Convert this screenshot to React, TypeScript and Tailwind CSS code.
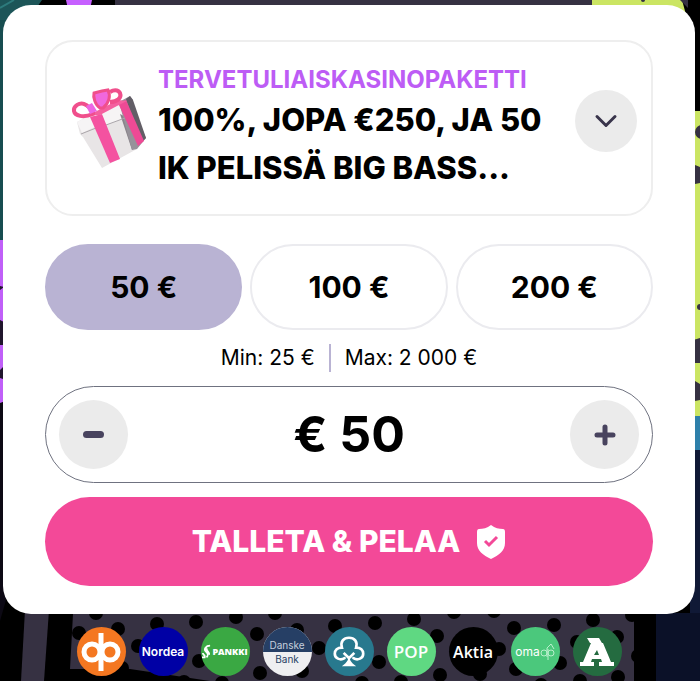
import React, { useState } from "react";
import { ChevronDown } from "lucide-react";

const presets = [50, 100, 200];

// dots visible under the bank row
const dots = [
  [79, 633], [96, 613], [118, 629], [138, 646], [157, 624], [122, 668], [196, 622], [199, 661], [236, 617],
  [257, 634], [260, 673], [275, 613], [297, 630], [319, 648], [335, 626], [302, 671], [375, 623], [379, 662],
  [414, 619], [437, 636], [440, 675], [401, 682], [454, 612], [494, 611], [514, 628], [499, 649], [480, 674],
  [554, 625], [560, 663], [516, 669], [593, 620], [617, 637], [577, 642], [618, 677], [632, 615], [638, 656],
  [184, 682], [222, 683], [362, 683], [541, 685], [580, 681],
];

function Backdrop() {
  return (
    <svg
      className="absolute inset-0 h-full w-full"
      viewBox="0 0 700 681"
      preserveAspectRatio="none"
      aria-hidden="true"
    >
      <rect width="700" height="681" fill="#000" />
      {/* top edge */}
      <path d="M0 0h42L28 20H0z" fill="#1c5558" />
      <path d="M0 8 14 0M0 34 24 6" stroke="#2d7b7c" strokeWidth="2" />
      <path d="M66 0h26l-3 14H69z" fill="#c660ff" />
      <rect x="115" width="480" height="20" fill="#363142" />
      <path d="M592 0h90l6 22-96-8z" fill="#cbe563" />
      <circle cx="643" cy="0" r="2" fill="#363142" />
      <path d="m680 0 8 8V0z" fill="#363142" />
      {/* left edge */}
      <path d="M0 20h6v220H0z" fill="#174d50" />
      <path d="M0 240h6v161l-6 2z" fill="#c05ff8" />
      <path d="M0 286l4 1-4 3zM0 320l6 3v22H0zM0 370l6-6v16l-6-2z" fill="#20152c" />
      <path d="M0 403h6v278H0z" fill="#0c0914" />
      <path d="M6 600v81H0v-60z" fill="#000" />
      {/* right edge */}
      <path d="M690 111h10v305h-10z" fill="#cbe563" />
      <ellipse cx="702" cy="132" rx="7" ry="7" fill="#363142" />
      <path d="M690 163l10 4v16l-10 2zM690 341l10-3v25h-10zM690 378l10 6v16l-10 2z" fill="#363142" />
      <circle cx="700" cy="307" r="3" fill="#363142" />
      <path d="M690 416h10v65l-10-12z" fill="#2e80aa" />
      <path d="M690 450h10v231h-80v-60h70z" fill="#101936" />
      {/* bottom edge */}
      <path d="M25 610h24l-5 71H21z" fill="#363142" />
      <path d="M73 614h562v67H210l-80-12H70z" fill="#363142" />
      {dots.map(([x, y]) => (
        <circle key={`${x}-${y}`} cx={x} cy={y} r="7" fill="#000" />
      ))}
      <path d="M634 610h22v71h-22z" fill="#000" />
      <path d="M656 613h44v68h-44z" fill="#0b1128" />
    </svg>
  );
}

function Gift() {
  return (
    <svg width="80" height="84" viewBox="0 0 80 84" fill="none" aria-hidden="true">
      <path d="m8 36 3 12 3 3 19 31 35-19 2-8-19-41z" fill="#e8e5e6" />
      <path d="m8 36 43-22 6 18-20 7-3-2-21 10z" fill="#f6f4f5" />
      <path d="m51 28 4 2 14 30-6 4z" fill="#8a858b" />
      <path d="m50 16 11-6 3 4v7l13 31-9 11-5 1z" fill="#97929a" />
      <path d="m57 13 4-3 3 4 13 38-5 5z" fill="#625e66" />
      <path d="m12 48 15-6M37 39l19-7" stroke="#aaa5aa" strokeWidth="1" />
      <path d="m21 31 12-3 18 45-10 4z" fill="#f452a0" />
      <path d="m49 17 8-3 18 41-6 5z" fill="#ee4a95" />
      <path d="m20 29 29-15 9 1-10 5-17 9z" fill="#f4609f" />
      <path d="M24 28C14 32 6 30 5 25s6-9 10-7c4 1 5 4 9 7Z" stroke="#f04f8c" strokeWidth="4" />
      <path d="M41 16c7 0 12-4 10-9-2-4-7-3-10-1" stroke="#f04f8c" strokeWidth="4" />
      <path d="M31 22c-5-3-7-11-6-15l8-2 6-1c3 6 1 13-5 18Z" fill="#f168dd" stroke="#f04f8c" strokeWidth="3" />
      <path d="m17 20 6-3 5 8-7 3z" fill="#ec67e4" />
    </svg>
  );
}

function ShieldIcon() {
  return (
    <svg width="30" height="34" viewBox="0 0 30 34" fill="none" aria-hidden="true">
      <path
        d="M15 0c4 3 8 4 12 4q2 0 2 3v11c0 8-6 12-14 16C7 30 1 26 1 18V7q0-3 2-3c4 0 8-1 12-4Z"
        fill="#fff"
      />
      <path d="m9 16 4 4 8-8" stroke="#f34998" strokeWidth="3" />
    </svg>
  );
}

function Op() {
  return (
    <svg width="40" height="40" viewBox="0 0 40 40" fill="none" stroke="#fff" strokeWidth="5" aria-label="OP">
      <circle cx="11" cy="20" r="8" />
      <circle cx="29" cy="20" r="8" />
      <path d="M20 1v38" />
    </svg>
  );
}

function Clover() {
  return (
    <svg width="34" height="32" viewBox="0 0 38 36" fill="none" stroke="#fff" strokeWidth="3" aria-label="S-Pankki">
      <path
        d="M14 25c-5 3-11 0-11-5 0-4 3-7 8-7-2-7 2-11 8-11s10 4 8 11c5 0 8 3 8 7 0 5-6 8-11 5"
        strokeLinecap="round"
      />
      <path d="M13 19l6 6 6-6" />
      <path d="M19 20c0 6-2 10-8 14h16c-6-4-8-8-8-14Z" fill="#fff" stroke="none" />
    </svg>
  );
}

function Alandsbanken() {
  return (
    <svg width="34" height="28" viewBox="0 0 34 28" fill="#fff" aria-label="Ålandsbanken">
      <path d="M7 0h12l3 5H10z" />
      <path
        fillRule="evenodd"
        d="M11 5h12l8 19h3v4H19v-4h3l-1-3h-9l-1 3h3v4H0v-4h3zM17 12l-3 5h5z"
      />
    </svg>
  );
}

const bank = "flex size-[49px] shrink-0 items-center justify-center overflow-hidden rounded-full text-white";

function Banks() {
  return (
    <div className="relative mt-[13px] mr-[5px] ml-[3px] flex justify-center gap-[13px] pb-[5px]">
      <div className={`${bank} bg-[#f47721]`}>
        <Op />
      </div>
      <div className={`${bank} bg-[#0000a5] text-[12px] font-semibold`}>Nordea</div>
      <div className={`${bank} gap-px bg-[#3aa843]`}>
        <svg width="9" height="16" viewBox="0 0 10 16" fill="none" stroke="#fff" strokeWidth="2" aria-hidden="true">
          <path d="M9 1C4 1 2 5 4 7s4 4 1 7M6 4c-3 2 3 4 2 7M1 9c0 3 3 2 2 5H0" />
        </svg>
        <span className="font-['Open_Sans',sans-serif] text-[9px] font-extrabold">PANKKI</span>
      </div>
      <div className={`${bank} flex-col bg-[#efeff1] text-[10px] leading-3`}>
        <span className="flex w-full flex-1 items-end justify-center bg-[#263f65] pb-px text-[#c5cfdd]">Danske</span>
        <span className="flex w-full flex-1 items-start justify-center pt-px text-[#263f65]">Bank</span>
      </div>
      <div className={`${bank} bg-[#28798e]`}>
        <Clover />
      </div>
      <div className={`${bank} bg-[#5fd882] font-['Open_Sans',sans-serif] text-[17px] font-semibold`}>POP</div>
      <div className={`${bank} bg-black font-['Open_Sans',sans-serif] text-[16px] font-semibold`}>Aktia</div>
      <div className={`${bank} bg-[#4bc87c] text-[12px] text-[#b9efcc]`}>
        oma
        <svg width="15" height="18" viewBox="0 0 15 18" fill="none" stroke="#b9efcc" aria-label="sp">
          <circle cx="4" cy="10" r="3" />
          <circle cx="11" cy="10" r="3" />
          <path d="M7 14V5l4-4 3 5M8 6v11" />
        </svg>
      </div>
      <div className={`${bank} bg-[#246b40]`}>
        <Alandsbanken />
      </div>
    </div>
  );
}

export default function App() {
  const [amount, setAmount] = useState(50);

  return (
    <div className="relative min-h-screen overflow-hidden bg-black font-['Inter',sans-serif] text-black">
      <Backdrop />
      <main className="relative mt-[5px] mr-[5px] ml-[3px] rounded-[28px] bg-white px-[42px] pt-[35px] pb-[28px]">
        <section className="flex items-center rounded-[28px] border-2 border-[#eeeeee] py-[22px] pr-[14px] pl-[22px]">
          <Gift />
          <div className="ml-[9px] min-w-0 flex-1">
            <h2 className="text-[24px] leading-[32px] font-bold text-[#bd5cf5]">TERVETULIAISKASINOPAKETTI</h2>
            <p className="text-[31px] leading-[48px] font-extrabold">
              100%, JOPA €250, JA 50
              <br />
              IK PELISSÄ BIG BASS...
            </p>
          </div>
          <button
            aria-label="Näytä tarjous"
            className="mb-[14px] flex size-[62px] shrink-0 items-center justify-center rounded-full bg-[#ebebeb]"
          >
            <ChevronDown className="size-9 text-[#39344b]" strokeWidth={2} />
          </button>
        </section>

        <div className="mt-[28px] grid grid-cols-3 gap-2">
          {presets.map((value) => (
            <button
              key={value}
              onClick={() => setAmount(value)}
              className={`h-[86px] rounded-full border-2 text-[30px] font-bold ${
                amount === value ? "border-[#b9b3d3] bg-[#b9b3d3]" : "border-[#ebebef] bg-white"
              }`}
            >
              {value} €
            </button>
          ))}
        </div>

        <div className="mt-[14px] flex h-[28px] items-center justify-center text-[21px]">
          <span className="border-r-2 border-[#b9b3d3] pr-[14px] leading-[28px]">Min: 25 €</span>
          <span className="pl-[14px] leading-[28px]">Max: 2 000 €</span>
        </div>

        <div className="mt-[14px] flex h-[97px] items-center justify-between rounded-full border border-[#6f7280] px-[13px]">
          <button
            aria-label="Vähennä"
            onClick={() => setAmount(Math.max(25, amount - 5))}
            className="flex size-[69px] shrink-0 items-center justify-center rounded-full bg-[#ebebeb]"
          >
            <span className="h-[7px] w-[21px] rounded-sm bg-[#48435e]" />
          </button>
          <input
            aria-label="Summa"
            value={`€ ${amount}`}
            onChange={(e) => setAmount(Number(e.target.value.replace(/\D/g, "")))}
            className="w-full min-w-0 bg-transparent text-center text-[50px] font-bold outline-none"
          />
          <button
            aria-label="Lisää"
            onClick={() => setAmount(Math.min(2000, amount + 5))}
            className="flex size-[69px] shrink-0 items-center justify-center rounded-full bg-[#ebebeb]"
          >
            <svg width="22" height="22" viewBox="0 0 22 22" stroke="#48435e" strokeWidth="5" strokeLinecap="round">
              <path d="M11 3v16M3 11h16" />
            </svg>
          </button>
        </div>

        <button className="mt-[14px] flex h-[89px] w-full items-center justify-center gap-[16px] rounded-full bg-[#f34998] text-[30px] font-extrabold text-white">
          TALLETA &amp; PELAA
          <ShieldIcon />
        </button>
      </main>
      <Banks />
    </div>
  );
}
